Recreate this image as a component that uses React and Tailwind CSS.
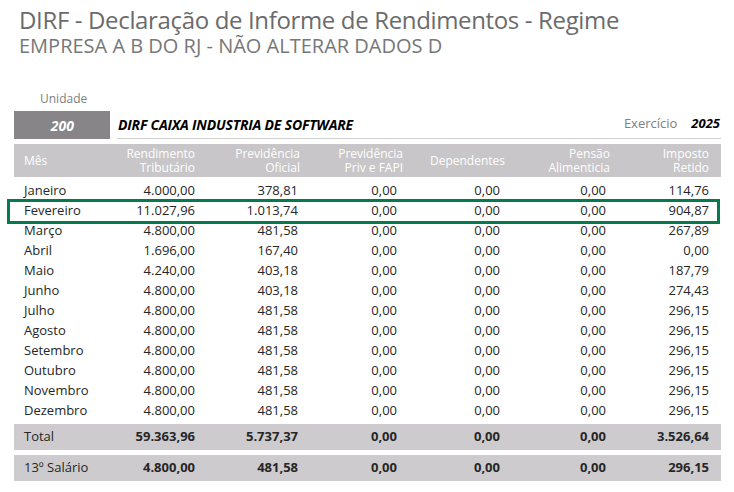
import React from "react";

const rows = [
  ["Janeiro", "4.000,00", "378,81", "0,00", "0,00", "0,00", "114,76"],
  ["Fevereiro", "11.027,96", "1.013,74", "0,00", "0,00", "0,00", "904,87"],
  ["Março", "4.800,00", "481,58", "0,00", "0,00", "0,00", "267,89"],
  ["Abril", "1.696,00", "167,40", "0,00", "0,00", "0,00", "0,00"],
  ["Maio", "4.240,00", "403,18", "0,00", "0,00", "0,00", "187,79"],
  ["Junho", "4.800,00", "403,18", "0,00", "0,00", "0,00", "274,43"],
  ["Julho", "4.800,00", "481,58", "0,00", "0,00", "0,00", "296,15"],
  ["Agosto", "4.800,00", "481,58", "0,00", "0,00", "0,00", "296,15"],
  ["Setembro", "4.800,00", "481,58", "0,00", "0,00", "0,00", "296,15"],
  ["Outubro", "4.800,00", "481,58", "0,00", "0,00", "0,00", "296,15"],
  ["Novembro", "4.800,00", "481,58", "0,00", "0,00", "0,00", "296,15"],
  ["Dezembro", "4.800,00", "481,58", "0,00", "0,00", "0,00", "296,15"],
];

const dataCols = "grid grid-cols-[86px_95px_103px_99px_103px_106px_103px] pr-[12px]";

function DataRow({ r }) {
  return (
    <div className={dataCols + " h-[20px] items-center"}>
      <div className="pl-[10px]">{r[0]}</div>
      {r.slice(1).map((v, i) => (
        <div key={i} className="text-right">{v}</div>
      ))}
    </div>
  );
}

function SumRow({ r }) {
  return (
    <div className={dataCols + " h-[26px] items-center bg-[#cdcbcd]"}>
      <div className="pl-[10px]">{r[0]}</div>
      {r.slice(1).map((v, i) => (
        <div key={i} className="text-right font-bold">{v}</div>
      ))}
    </div>
  );
}

export default function App() {
  return (
    <div
      className="w-[734px] h-[492px] bg-white overflow-hidden relative text-[#262626]"
      style={{ fontFamily: '"Open Sans", "Noto Sans", sans-serif' }}
    >
      <div className="pl-[19px] pt-[5px]">
        <div className="text-[24px] leading-[30px] text-[#6b6b6b] tracking-[-0.35px]">
          DIRF - Declaração de Informe de Rendimentos - Regime
        </div>
        <div className="text-[20px] leading-[22px] text-[#777777]">
          EMPRESA A B DO RJ - NÃO ALTERAR DADOS D
        </div>
      </div>

      <div className="pl-[40px] mt-[34px] text-[12px] leading-[16px] text-[#808080]">Unidade</div>

      <div className="mx-[14px] mt-[4px] w-[707px] text-[13px]">
        <div className="flex items-stretch h-[28px]">
          <div className="w-[96px] bg-[#878587] flex items-center justify-end pr-[36px] text-white font-bold italic text-[14px]">
            200
          </div>
          <div className="flex-1 ml-[7px] border-b border-[#cfcfcf] flex items-center justify-between pb-[1px]">
            <span className="font-bold italic text-black text-[14px] pl-[1px] tracking-[-0.2px]">
              DIRF CAIXA INDUSTRIA DE SOFTWARE
            </span>
            <span className="flex items-center">
              <span className="text-[#808080] text-[13px]">Exercício</span>
              <span className="font-bold italic text-black text-[13px] ml-[14px] pr-[1px]">2025</span>
            </span>
          </div>
        </div>

        <div className="mt-[5px] h-[33px] bg-[#c8c6c8] text-white text-[12px] leading-[14px] grid grid-cols-[86px_95px_105px_103px_102px_105px_99px] pr-[12px] items-center">
          <div className="pl-[10px]">Mês</div>
          <div className="text-right">Rendimento<br />Tributário</div>
          <div className="text-right">Previdência<br />Oficial</div>
          <div className="text-right">Previdência<br />Priv e FAPI</div>
          <div className="text-right">Dependentes</div>
          <div className="text-right">Pensão<br />Alimenticia</div>
          <div className="text-right">Imposto<br />Retido</div>
        </div>

        <div className="pt-[4px]">
          {rows.map((r, i) =>
            i === 1 ? (
              <div key={i} className="relative">
                <div className="absolute left-[-7px] right-[1px] top-[-2px] bottom-[-3px] border-[3px] border-[#047a4e]" />
                <DataRow r={r} />
              </div>
            ) : (
              <DataRow key={i} r={r} />
            )
          )}
        </div>

        <div className="mt-[3px]">
          <SumRow r={["Total", "59.363,96", "5.737,37", "0,00", "0,00", "0,00", "3.526,64"]} />
        </div>
        <div className="mt-[5px]">
          <SumRow r={["13º Salário", "4.800,00", "481,58", "0,00", "0,00", "0,00", "296,15"]} />
        </div>
      </div>
    </div>
  );
}
